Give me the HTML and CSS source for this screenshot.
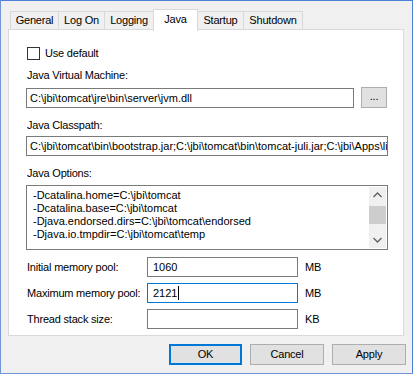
FILE: index.html
```html
<!DOCTYPE html>
<html>
<head>
<meta charset="utf-8">
<link rel="stylesheet" href="styles.css">
</head>
<body>
<div class="window">
  <div class="tabs">
    <div class="tab t-general">General</div>
    <div class="tab t-logon">Log On</div>
    <div class="tab t-logging">Logging</div>
    <div class="tab t-java selected">Java</div>
    <div class="tab t-startup">Startup</div>
    <div class="tab t-shutdown">Shutdown</div>
  </div>
  <div class="panel">
    <div class="check-row">
      <span class="checkbox"></span>
      <span class="check-label">Use default</span>
    </div>
    <div class="label l-jvm">Java Virtual Machine:</div>
    <div class="jvm-row">
      <div class="input wide">C:\jbi\tomcat\jre\bin\server\jvm.dll</div>
      <div class="browse">...</div>
    </div>
    <div class="label l-cp">Java Classpath:</div>
    <div class="input full">C:\jbi\tomcat\bin\bootstrap.jar;C:\jbi\tomcat\bin\tomcat-juli.jar;C:\jbi\Apps\lib\commons.jar</div>
    <div class="label l-opt">Java Options:</div>
    <div class="textarea">
      <div class="lines">
        <div>-Dcatalina.home=C:\jbi\tomcat</div>
        <div>-Dcatalina.base=C:\jbi\tomcat</div>
        <div>-Djava.endorsed.dirs=C:\jbi\tomcat\endorsed</div>
        <div>-Djava.io.tmpdir=C:\jbi\tomcat\temp</div>
      </div>
      <div class="scrollbar">
        <svg class="arrow" width="17" height="17" viewBox="0 0 17 17"><path d="M4.5 10 L8.5 6 L12.5 10" fill="none" stroke="#606060" stroke-width="1.3"/></svg>
        <div class="track"><div class="thumb"></div></div>
        <svg class="arrow" width="17" height="17" viewBox="0 0 17 17"><path d="M4.5 7 L8.5 11 L12.5 7" fill="none" stroke="#606060" stroke-width="1.3"/></svg>
      </div>
    </div>
    <div class="mem-row first">
      <span class="mem-label">Initial memory pool:</span>
      <div class="input mem">1060</div>
      <span class="unit">MB</span>
    </div>
    <div class="mem-row">
      <span class="mem-label">Maximum memory pool:</span>
      <div class="input mem focused">2121<span class="caret"></span></div>
      <span class="unit">MB</span>
    </div>
    <div class="mem-row">
      <span class="mem-label">Thread stack size:</span>
      <div class="input mem"></div>
      <span class="unit">KB</span>
    </div>
  </div>
  <div class="buttons">
    <div class="btn default">OK</div>
    <div class="btn">Cancel</div>
    <div class="btn">Apply</div>
  </div>
</div>
</body>
</html>
```

FILE: styles.css
```css
html, body {
  margin: 0;
  padding: 0;
  background: #ffffff;
}
body {
  font-family: "Liberation Sans", Arial, sans-serif;
  font-size: 11px;
  letter-spacing: -0.2px;
  color: #000;
  white-space: nowrap;
}
.window {
  width: 413px;
  height: 374px;
  box-sizing: border-box;
  border: 1px solid #4a80d8;
  border-left-color: #7096d6;
  border-bottom-color: #7096d6;
  background: #f0f0f0;
  padding: 8px 8px 0 7px;
  display: flex;
  flex-direction: column;
}
.tabs {
  display: flex;
  padding-left: 2px;
  height: 20px;
  align-items: flex-start;
}
.tab {
  box-sizing: border-box;
  height: 18px;
  margin-top: 2px;
  margin-left: -1px;
  border: 1px solid #d9d9d9;
  border-bottom: none;
  background: #f0f0f0;
  text-align: center;
  line-height: 17px;
}
.tab:first-child { margin-left: 0; }
.t-general { width: 49px; }
.t-logon { width: 47px; }
.t-logging { width: 50px; }
.t-java { width: 45px; }
.t-startup { width: 47px; }
.t-shutdown { width: 60px; }
.tab.selected {
  height: 22px;
  margin-top: 0;
  background: #fff;
  position: relative;
  z-index: 1;
  line-height: 18px;
}
.panel {
  box-sizing: border-box;
  width: 396px;
  height: 307px;
  border: 1px solid #d9d9d9;
  background: #fff;
  padding: 16px 0 0 17px;
  display: flex;
  flex-direction: column;
  align-items: flex-start;
}
.check-row {
  display: flex;
  align-items: center;
  height: 15px;
}
.checkbox {
  box-sizing: border-box;
  width: 13px;
  height: 13px;
  border: 1px solid #333;
  background: #fff;
  margin-left: 1px;
}
.check-label {
  margin-left: 5px;
  line-height: 15px;
}
.label {
  line-height: 15px;
  margin-left: 1px;
}
.l-jvm { margin-top: 7px; }
.l-cp { margin-top: 10px; }
.l-opt { margin-top: 10px; }
.jvm-row {
  display: flex;
  align-items: flex-start;
  margin-top: 5px;
}
.input {
  box-sizing: border-box;
  height: 20px;
  border: 1px solid #7a7a7a;
  background: #fff;
  line-height: 18px;
  padding: 0 3px;
  white-space: nowrap;
  overflow: hidden;
  letter-spacing: 0;
}
.input.wide { width: 328px; }
.input.full { width: 362px; margin-top: 3px; }
.browse {
  box-sizing: border-box;
  width: 26px;
  height: 21px;
  margin-top: -1px;
  margin-left: 7px;
  border: 1px solid #adadad;
  background: #e1e1e1;
  text-align: center;
  line-height: 16px;
}
.textarea {
  box-sizing: border-box;
  width: 362px;
  height: 65px;
  margin-top: 4px;
  border: 1px solid #7a7a7a;
  display: flex;
  overflow: hidden;
}
.lines {
  flex: 1;
  padding: 3px 0 0 6px;
  line-height: 13px;
  white-space: nowrap;
  overflow: hidden;
  letter-spacing: 0;
}
.scrollbar {
  width: 17px;
  background: #f0f0f0;
  display: flex;
  flex-direction: column;
  margin: 1px 1px 1px 0;
}
.arrow { display: block; flex: none; }
.track { flex: 1; padding-top: 2px; }
.thumb {
  width: 17px;
  height: 18px;
  background: #cdcdcd;
}
.mem-row {
  display: flex;
  align-items: center;
  margin-top: 6px;
  height: 20px;
}
.mem-row.first { margin-top: 7px; }
.mem-label {
  width: 120px;
  margin-left: 1px;
}
.input.mem {
  width: 151px;
  padding-left: 5px;
}
.input.focused { border-color: #0078d7; }
.caret {
  display: inline-block;
  width: 1px;
  height: 14px;
  background: #000;
  vertical-align: -3px;
  margin-left: 1px;
}
.unit { margin-left: 7px; }
.buttons {
  display: flex;
  justify-content: flex-end;
  gap: 8px;
  margin-top: 8px;
  padding-right: 6px;
  margin-right: -8px;
}
.btn {
  box-sizing: border-box;
  width: 74px;
  height: 21px;
  border: 1px solid #adadad;
  background: #e1e1e1;
  text-align: center;
  line-height: 19px;
}
.btn.default {
  border: 2px solid #0078d7;
  line-height: 17px;
  width: 73px;
}
```
